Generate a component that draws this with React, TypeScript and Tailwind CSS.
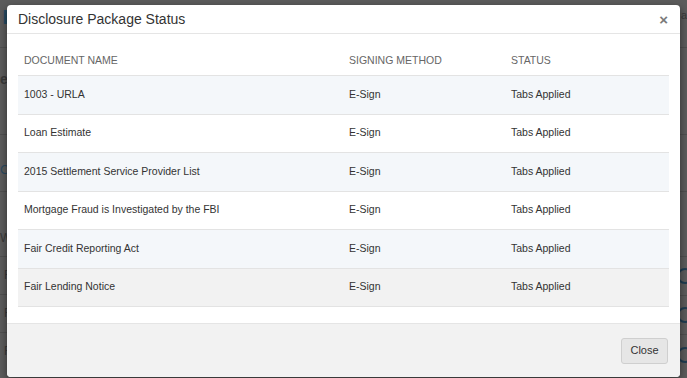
import React from 'react';

const rows = [
  { name: '1003 - URLA', method: 'E-Sign', status: 'Tabs Applied', bg: 'bg-[#f4f7fa]' },
  { name: 'Loan Estimate', method: 'E-Sign', status: 'Tabs Applied', bg: 'bg-white' },
  { name: '2015 Settlement Service Provider List', method: 'E-Sign', status: 'Tabs Applied', bg: 'bg-[#f4f7fa]' },
  { name: 'Mortgage Fraud is Investigated by the FBI', method: 'E-Sign', status: 'Tabs Applied', bg: 'bg-white' },
  { name: 'Fair Credit Reporting Act', method: 'E-Sign', status: 'Tabs Applied', bg: 'bg-[#f4f7fa]' },
  { name: 'Fair Lending Notice', method: 'E-Sign', status: 'Tabs Applied', bg: 'bg-[#f2f2f2]' },
];

const App = () => {
  return (
    <div className="relative w-[687px] h-[378px] overflow-hidden bg-[#5c5c5c] font-['Liberation_Sans',Arial,sans-serif]">
      {/* dimmed page behind the dialog */}
      <div className="flex h-full justify-between text-[#3a3a3a]">
        <div className="flex w-[20px] flex-col overflow-hidden">
          <div className="h-[48px] border-b border-[#505050] pt-[2px] pl-[2px] text-[26px] font-bold leading-none text-[#254b62]">rg</div>
          <div className="h-[87px] border-b border-[#505050] pt-[24px] text-[14px] font-bold leading-none">es</div>
          <div className="h-[57px] border-b border-[#505050] pt-[28px] text-[13px] leading-none text-[#2c4a60]">Co</div>
          <div className="h-[65px] border-b border-[#505050] pt-[40px] text-[12px] leading-none">W</div>
          <div className="h-[38px] border-b border-[#505050] pt-[12px] pl-[4px] text-[12px] leading-none">F</div>
          <div className="h-[38px] border-b border-[#505050] pt-[12px] pl-[4px] text-[12px] leading-none">F</div>
          <div className="h-[38px] pt-[12px] pl-[4px] text-[12px] leading-none">F</div>
        </div>
        <div className="flex w-[12px] flex-col items-end">
          <div className="h-[48px] w-full border-b border-[#505050] pt-[10px] text-right text-[11px] leading-none">a</div>
          <div className="h-[87px] w-full border-b border-[#505050]" />
          <div className="h-[57px] w-full border-b border-[#505050]" />
          <div className="h-[65px] w-full border-b border-[#505050]" />
          <div className="flex h-[39px] w-full items-center border-b border-[#505050]">
            <span className="ml-[2px] h-[16px] w-[16px] shrink-0 rounded-full border-2 border-[#1f3d52]" />
          </div>
          <div className="flex h-[39px] w-full items-center border-b border-[#505050]">
            <span className="ml-[2px] h-[16px] w-[16px] shrink-0 rounded-full border-2 border-[#1f3d52]" />
          </div>
          <div className="flex h-[39px] w-full items-center">
            <span className="ml-[2px] h-[16px] w-[16px] shrink-0 rounded-full border-2 border-[#1f3d52]" />
          </div>
        </div>
      </div>

      {/* dialog */}
      <div className="absolute left-[7px] top-[5px] flex h-[372px] w-[673px] flex-col overflow-hidden rounded-[4px] bg-white shadow-[0_3px_9px_rgba(0,0,0,0.5)]">
        <div className="flex h-[29px] shrink-0 items-center justify-between border-b border-[#e5e5e5] pl-[11px] pr-[12px]">
          <h4 className="text-[14px] leading-none text-[#333]">Disclosure Package Status</h4>
          <span className="text-[15px] font-bold leading-none text-[#7a7a7a]">×</span>
        </div>
        <div className="flex-1 px-[11px] pt-[12px]">
          <div className="flex h-[30px] items-center border-b border-[#e3e3e3] text-[10.5px] text-[#666]">
            <div className="w-[331px] pl-[6px]">DOCUMENT NAME</div>
            <div className="w-[162px]">SIGNING METHOD</div>
            <div>STATUS</div>
          </div>
          {rows.map(r => (
            <div key={r.name} className={`flex h-[38.5px] items-center border-b border-[#e3e3e3] text-[10.5px] text-[#333] ${r.bg}`}>
              <div className="w-[331px] pl-[6px]">{r.name}</div>
              <div className="w-[162px]">{r.method}</div>
              <div>{r.status}</div>
            </div>
          ))}
        </div>
        <div className="flex h-[54px] shrink-0 items-center justify-end border-t border-[#e5e5e5] bg-[#f2f2f2] pr-[12px]">
          <button className="h-[26px] w-[47px] rounded-[3px] border border-[#cfcfcf] bg-[#e6e6e6] text-[11px] text-[#333]">
            Close
          </button>
        </div>
      </div>
    </div>
  );
};

export default App;
